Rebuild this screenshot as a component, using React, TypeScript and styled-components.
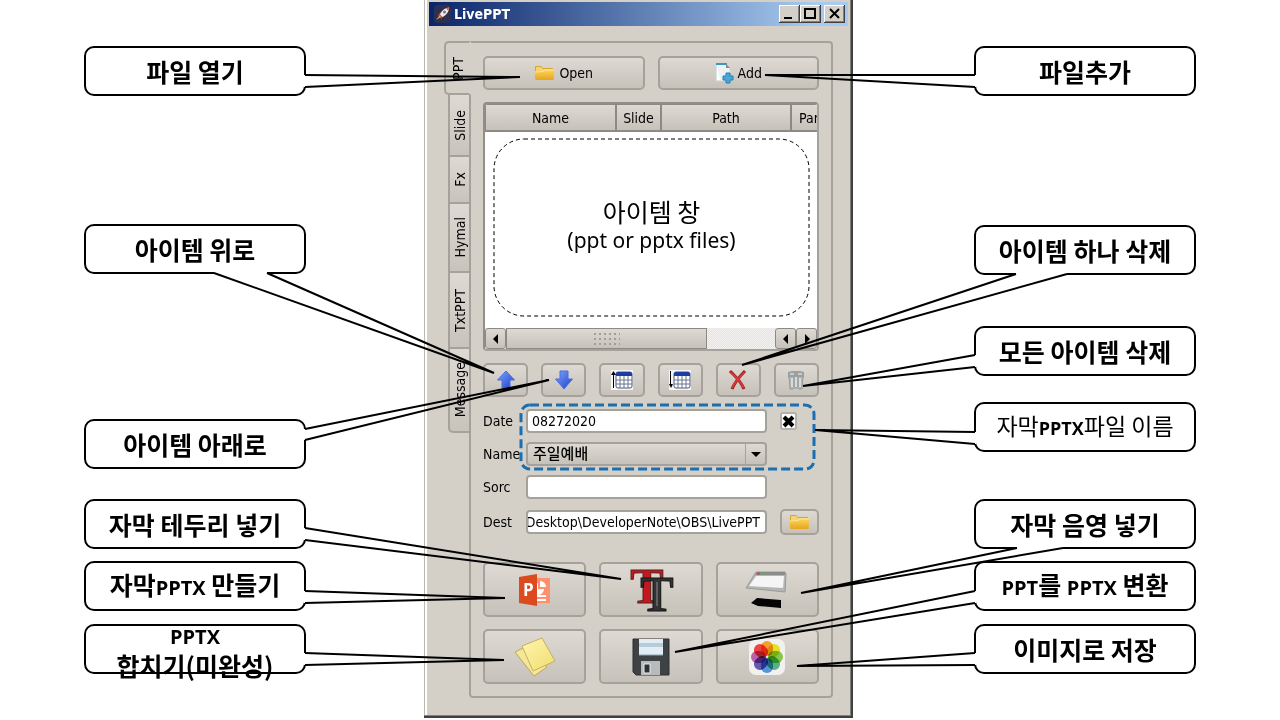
import React, { useState } from "react";
import styled, { createGlobalStyle, css } from "styled-components";

const face = "#d4d0c8";
const edge = "#a5a19b";
const faceGradient = "linear-gradient(#dedad3, #c6c1b9)";
const uiFont = '"DejaVu Sans Condensed", "DejaVu Sans", "Noto Sans CJK KR", sans-serif';
const noteFont = '"Noto Sans CJK KR", "Noto Sans", sans-serif';

const GlobalStyle = createGlobalStyle`
  *, *::before, *::after { box-sizing: border-box; }
  body { margin: 0; background: #fff; color: #000; font-family: ${uiFont}; font-size: 14px; }
  button, input, select { font: inherit; color: inherit; margin: 0; }
  p { margin: 0; }
`;

const Slide = styled.main`
  display: flex;
  justify-content: center;
  align-items: flex-start;
  min-height: 100vh;
  overflow: hidden;
`;

const NoteColumn = styled.section`
  flex: 0 0 222px;
  display: flex;
  flex-direction: column;
  padding-top: 46px;
  font-family: ${noteFont};
`;

const NoteBox = styled.div<{ $gap: number; $light?: boolean }>`
  position: relative;
  display: flex;
  flex-direction: column;
  align-items: center;
  justify-content: center;
  height: 50px;
  margin-top: ${(p) => p.$gap}px;
  border: 2px solid #000;
  border-radius: 10px;
  background: #fff;
  text-align: center;
  white-space: nowrap;
  font-size: ${(p) => (p.$light ? 23 : 25)}px;
  font-weight: ${(p) => (p.$light ? 400 : 700)};
  line-height: 29px;
`;

const NoteText = styled.p`
  position: relative;
  z-index: 2;
`;

const Latin = styled.span<{ $small?: boolean }>`
  font-family: "Open Sans", "Noto Sans", sans-serif;
  font-size: ${(p) => (p.$small ? 18 : 20)}px;
  font-weight: 700;
`;

const Tail = styled.svg`
  position: absolute;
  top: -2px;
  left: -2px;
  width: 222px;
  height: 50px;
  overflow: visible;
  pointer-events: none;
  z-index: 1;
`;

type Point = [number, number];

interface NoteProps {
  gap?: number;
  light?: boolean;
  from: Point;
  tip: Point;
  to: Point;
  children: React.ReactNode;
}

function Note({ gap = 0, light, from, tip, to, children }: NoteProps) {
  return (
    <NoteBox $gap={gap} $light={light}>
      <Tail aria-hidden="true">
        <path d={`M${from}L${to}`} stroke="#fff" strokeWidth="3" />
        <path d={`M${from}L${tip}L${to}`} fill="none" stroke="#000" strokeWidth="2" strokeLinejoin="bevel" />
      </Tail>
      <NoteText>{children}</NoteText>
    </NoteBox>
  );
}

const Window = styled.section`
  flex: 0 0 429px;
  min-width: 0;
  margin: 0 121px 0 118px;
  padding: 2px 5px 20px;
  background: ${face};
  box-shadow: inset -2px -2px #404040, inset -3px -3px #808080, inset 1px 0 #bdb9b1, inset 3px 0 #fff;
`;

const TitleBar = styled.header`
  display: flex;
  align-items: center;
  gap: 3px;
  height: 24px;
  padding: 0 3px 0 5px;
  background: linear-gradient(90deg, #0a246a, #a6caf0 92%);
  color: #fff;
`;

const Title = styled.h1`
  flex: 1;
  margin: 0;
  font-size: 14px;
  line-height: 20px;
`;

const CaptionButtons = styled.div`
  display: flex;
`;

const CaptionButton = styled.button<{ $apart?: boolean }>`
  display: flex;
  width: 21px;
  height: 18px;
  padding: 0;
  margin-left: ${(p) => (p.$apart ? 3 : 0)}px;
  border: 0;
  background: ${face};
  box-shadow: inset -1px -1px #404040, inset 1px 1px #fff, inset -2px -2px #808080;
`;

const Client = styled.div`
  display: flex;
  padding: 15px 15px 0;
`;

const Tabs = styled.div`
  flex: 0 0 27px;
  margin-right: -2px;
  display: flex;
  flex-direction: column;
  align-items: flex-end;
`;

const Tab = styled.button<{ $height: number; $active?: boolean }>`
  display: flex;
  align-items: center;
  justify-content: center;
  width: 23px;
  height: ${(p) => p.$height}px;
  padding: 0;
  border: 2px solid ${edge};
  border-top-width: 0;
  background: linear-gradient(#dedad3, #c8c3bb);
  span {
    writing-mode: vertical-rl;
    transform: rotate(180deg);
    line-height: 18px;
  }
  &:last-child { border-bottom-left-radius: 5px; }
  ${(p) =>
    p.$active &&
    css`
      position: relative;
      width: 27px;
      border-top-width: 2px;
      border-right-color: ${face};
      border-radius: 5px 0 0 5px;
      background: ${face};
    `}
`;

const Pane = styled.div`
  flex: 1;
  min-width: 0;
  padding: 13px 12px 12px;
  border: 2px solid ${edge};
  border-radius: 0 4px 4px 4px;
`;

const ButtonGrid = styled.div<{ $columns: number; $top?: number }>`
  display: grid;
  grid-template-columns: repeat(${(p) => p.$columns}, 1fr);
  gap: 12px 13px;
  margin-top: ${(p) => p.$top ?? 0}px;
`;

const PushButton = styled.button<{ $height: number }>`
  display: flex;
  align-items: center;
  justify-content: center;
  gap: 4px;
  height: ${(p) => p.$height}px;
  padding: 0;
  border: 2px solid ${edge};
  border-radius: 5px;
  background: ${faceGradient};
  svg { flex: none; }
`;

const ListFrame = styled.div`
  margin-top: 12px;
  border: 2px solid #918d87;
  border-right-color: ${edge};
  border-bottom-color: ${edge};
  border-radius: 4px;
  background: #fff;
  overflow: hidden;
`;

const ItemTable = styled.table`
  table-layout: fixed;
  width: 342px;
  border-collapse: separate;
  border-spacing: 0;
  th {
    height: 28px;
    padding: 0;
    border: 1px solid #8d8983;
    border-width: 1px 1px 2px;
    background: ${faceGradient};
    font-weight: 400;
    text-align: center;
  }
`;

const DropArea = styled.div`
  position: relative;
  display: flex;
  flex-direction: column;
  align-items: center;
  justify-content: center;
  height: 177px;
  margin: 7px 8px 12px 9px;
  padding-bottom: 4px;
  font-family: ${noteFont};
  font-size: 25px;
  line-height: 29px;
`;

const DropLatin = styled.p`
  font-family: "Noto Sans", sans-serif;
  font-size: 21px;
`;

const Outline = styled.svg`
  position: absolute;
  inset: 0;
  width: 100%;
  height: 100%;
  overflow: visible;
  pointer-events: none;
`;

const ScrollBar = styled.div`
  display: flex;
  height: 21px;
  background: repeating-conic-gradient(#f4f3f1 0 25%, #e4e2de 0 50%) 0 0 / 2px 2px;
`;

const ScrollButton = styled.button`
  display: flex;
  align-items: center;
  justify-content: center;
  width: 21px;
  padding: 0;
  border: 1px solid #8d8983;
  border-radius: 3px;
  background: ${faceGradient};
`;

const Thumb = styled.div`
  display: flex;
  align-items: center;
  justify-content: center;
  width: 201px;
  border: 1px solid #8d8983;
  background: ${faceGradient};
`;

const Track = styled.div`
  flex: 1;
`;

const Form = styled.form`
  position: relative;
  display: flex;
  flex-direction: column;
  gap: 9px;
  margin-top: 12px;
`;

const Row = styled.div<{ $tall?: boolean }>`
  display: grid;
  grid-template-columns: 43px 1fr 39px;
  align-items: center;
  height: ${(p) => (p.$tall ? 28 : 24)}px;
`;

const Label = styled.label`
  line-height: 20px;
`;

const field = css`
  width: 100%;
  min-width: 0;
  height: 24px;
  border: 2px solid ${edge};
  border-radius: 4px;
  outline: none;
`;

const FieldCell = styled.div`
  position: relative;
  display: flex;
  margin-right: 13px;
`;

const TextInput = styled.input<{ $tail?: boolean }>`
  ${field}
  padding: 0 4px;
  background: #fff;
  ${(p) => p.$tail && "direction: rtl; padding: 0 5px 0 0;"}
`;

const Select = styled.select`
  ${field}
  appearance: none;
  padding: 0 24px 0 5px;
  background: ${faceGradient};
  font-size: 15px;
  font-weight: 500;
  line-height: 20px;
`;

const SelectArrow = styled.span`
  position: absolute;
  top: 2px;
  right: 2px;
  bottom: 2px;
  display: flex;
  align-items: center;
  justify-content: center;
  width: 20px;
  border-left: 1px solid ${edge};
  pointer-events: none;
`;

const Check = styled.input`
  appearance: none;
  width: 17px;
  height: 18px;
  margin: 0;
  border: 2px solid #b5b1aa;
  border-radius: 3px;
  background: #fff;
`;

const CheckCell = styled.div`
  position: relative;
  display: flex;
  width: 17px;
  svg {
    position: absolute;
    inset: 0;
    pointer-events: none;
  }
`;

const DashedGroup = styled.svg`
  position: absolute;
  top: -4px;
  left: 38px;
  width: calc(100% - 43px);
  height: 64px;
  overflow: visible;
  pointer-events: none;
`;

const RocketIcon = () => (
  <svg width="17" height="18" viewBox="0 0 17 18" aria-hidden="true">
    <rect width="17" height="18" rx="4" fill="#2b3150" />
    <path d="M4 10l3-3 3 3-3 4-1-2z" fill="#d9472b" />
    <path d="M6 9.500C8 5 11 3 15 2.500c0 4-2.500 7.500-6.500 9.500z" fill="#f1ece9" />
    <path d="M12 3.500l3-1-.6 3.500z" fill="#de5a3c" />
    <circle cx="10.500" cy="7" r="1.500" fill="#6f7795" />
    <path d="M2 15l3.500-4.500L7 12z" fill="#f3a34c" />
  </svg>
);

const FolderIcon = () => (
  <svg width="21" height="16" viewBox="0 0 21 16" aria-hidden="true">
    <defs>
      <linearGradient id="folder" x2="0" y2="1">
        <stop stopColor="#fbd660" />
        <stop offset="1" stopColor="#e6a51b" />
      </linearGradient>
    </defs>
    <path d="M1 13V2q0-1 1-1h5l2 2h9q1 0 1 1v9z" fill="#d9a431" />
    <path d="M2 2h5l2 2h9v2H2z" fill="#f5d372" />
    <path d="M.5 6.500l8-.5 2-1.500H20.500L19.500 15H1.500z" fill="url(#folder)" />
    <path d="M1 7l8-.5 2-1.500h9" fill="none" stroke="#ffe891" />
  </svg>
);

const AddIcon = () => (
  <svg width="19" height="21" viewBox="0 0 19 21" aria-hidden="true">
    <path d="M1 1h10l4 4v13H1z" fill="#eef2f5" stroke="#c9d3da" />
    <path d="M1 1h11" stroke="#3f95bd" strokeWidth="2" />
    <path d="M11 1v4h4z" fill="#8c8a80" />
    <path d="M2 3l3 14H2z" fill="#fff" />
    <path d="M11 10h4v3h3v4h-3v3h-4v-3H8v-4h3z" fill="#48a8d8" stroke="#2b7fab" />
  </svg>
);

const ArrowIcon = ({ down }: { down?: boolean }) => (
  <svg width="20" height="20" viewBox="0 0 20 20" aria-hidden="true">
    <defs>
      <linearGradient id="blue" x2="1" y2="1">
        <stop stopColor="#7da4ff" />
        <stop offset="1" stopColor="#1f40c8" />
      </linearGradient>
    </defs>
    <path
      d={down ? "M6 1h8v8h4.500L10 19 1.500 9H6z" : "M10 1l8.500 9H14v8H6v-8H1.500z"}
      fill="url(#blue)"
      stroke="#4a6fe0"
    />
  </svg>
);

const GridIcon = ({ down }: { down?: boolean }) => (
  <svg width="22" height="20" viewBox="0 0 22 20" aria-hidden="true">
    <path d="M0 0h22v20H0z" fill="#f6f6f8" />
    <path d="M5 4q0-2 2-2h12q2 0 2 2v12q0 2-2 2H7q-2 0-2-2z" fill="#fff" stroke="#4d5878" />
    <path d="M5 6V4q0-2 2-2h12q2 0 2 2v2z" fill="#1f3d9e" />
    <path d="M9 6v12M13 6v12M17 6v12M5 10h16M5 14h16" stroke="#69758f" />
    <path d={down ? "M1.500 1v15" : "M2.500 4v14"} stroke="#000" />
    <path d={down ? "M0 14h4l-2 4z" : "M0 5h5L2.500 1z"} />
  </svg>
);

const DeleteIcon = () => (
  <svg width="20" height="22" viewBox="0 0 20 22" aria-hidden="true">
    <path d="M2 2c4 4 11 10 14 18M17 2C11 8 7 13 4 20" fill="none" stroke="#8f1c1c" strokeWidth="3" />
    <path d="M2 3c4 3 10 9 14 16M17 3C11 8 7 13 4 19" fill="none" stroke="#d8383a" strokeWidth="2" />
  </svg>
);

const TrashIcon = () => (
  <svg width="18" height="20" viewBox="0 0 18 20" aria-hidden="true">
    <path d="M2 5h14l-1 14h-3l-1-1H7l-1 1H3z" fill="#b3b8b6" stroke="#969c9a" />
    <path d="M5 1h8l4 1v6l-2-1H3L1 8V2z" fill="#9aa1a0" />
    <path d="M5 8v9M9 7v10M13 8v9" stroke="#d9dcda" strokeWidth="2" />
    <path d="M7 7v10M11 7v10" stroke="#8e9593" />
    <path d="M3 4h4M11 4h4" stroke="#c8cbc9" strokeWidth="2" />
  </svg>
);

const PowerPointIcon = () => (
  <svg width="34" height="32" viewBox="0 0 34 32" aria-hidden="true">
    <path d="M17 4h15v25H17z" fill="#ff8f6d" />
    <path d="M20 9a6 6 0 1 0 6 6h-6z" fill="#fff" />
    <path d="M22 7a6 6 0 0 1 6 6h-6z" fill="#fff" />
    <path d="M19 22h9M19 26h9" stroke="#fff" strokeWidth="2" />
    <path d="M1 3l18-3v32L1 29z" fill="#dc4a1f" />
    <text x="5" y="22" fontFamily="Open Sans, sans-serif" fontSize="17" fontWeight="700" fill="#fff">P</text>
  </svg>
);

const TextBorderIcon = () => (
  <svg width="42" height="46" viewBox="0 0 42 46" overflow="visible" aria-hidden="true">
    <g fontFamily="Liberation Serif, serif" fontWeight="700" textAnchor="middle">
      <text x="17" y="36" fontSize="50" fill="#c5171d" stroke="#5c2020">T</text>
      <text x="27" y="44" fontSize="50" fill="#333" stroke="#101010">T</text>
    </g>
    <path d="M27 15v24" stroke="#606060" strokeWidth="2" />
  </svg>
);

const ShadowIcon = () => (
  <svg width="44" height="40" viewBox="0 0 44 40" aria-hidden="true">
    <path d="M11 2h29l1 2-1 18L1 18z" fill="#b5b5b5" stroke="#9a9a9a" />
    <path d="M12 2h28v3H10z" fill="#8c8c8c" />
    <path d="M11 6h28l-1 12-34-2z" fill="#f5f5f5" />
    <path d="M12 3.500h3" stroke="#d34b43" strokeWidth="2" />
    <path d="M17 3.500h3" stroke="#5eab5a" strokeWidth="2" />
    <path d="M12 28l24 2v8l-23-2-7-3z" fill="#050505" />
  </svg>
);

const NotesIcon = () => (
  <svg width="43" height="40" viewBox="0 0 43 40" aria-hidden="true">
    <defs>
      <linearGradient id="paper" x2="1" y2="1">
        <stop stopColor="#fff5ad" />
        <stop offset="1" stopColor="#f1dd72" />
      </linearGradient>
    </defs>
    <path d="M2 15l10-5 22 20-13 9z" fill="#f5e794" stroke="#b7a860" />
    <path d="M9 9L29 1l13 23-22 10z" fill="url(#paper)" stroke="#c2b163" />
  </svg>
);

const FloppyIcon = () => (
  <svg width="38" height="38" viewBox="0 0 38 38" aria-hidden="true">
    <path d="M1 1h36v36H4l-3-3z" fill="#3f4245" stroke="#2d2f31" />
    <path d="M7 1h24v16H7z" fill="#e3edf3" />
    <path d="M7 5h24v4H7z" fill="#b4ccdc" />
    <path d="M7 17h24" stroke="#8fa5b3" />
    <path d="M9 23h19v14H9z" fill="#b8bbbd" />
    <path d="M12 26h6v9h-6z" fill="#2e3032" stroke="#ececec" />
  </svg>
);

const petals = ["#f79a1c", "#dfe01c", "#82c341", "#4cae82", "#4c8fd6", "#5a50ae", "#b55aa5", "#ee3a3c"];

const PhotosIcon = () => (
  <svg width="36" height="36" viewBox="0 0 36 36" aria-hidden="true">
    <rect width="36" height="36" rx="7" fill="#f2f1ef" />
    <g style={{ isolation: "isolate" }}>
      {petals.map((color, i) => (
        <rect
          key={color}
          x="12"
          y="2"
          width="12"
          height="15"
          rx="6"
          fill={color}
          opacity="0.95"
          transform={`rotate(${i * 45} 18 18)`}
          style={{ mixBlendMode: "multiply" }}
        />
      ))}
    </g>
  </svg>
);

const Triangle = ({ d }: { d: string }) => (
  <svg width="10" height="10" viewBox="0 0 10 10" aria-hidden="true">
    <path d={d} />
  </svg>
);

const Grip = () => (
  <svg width="26" height="14" viewBox="0 0 26 14" aria-hidden="true">
    {[1, 6, 11].map((y) => (
      <path key={y} d={`M0 ${y + 1}h26`} stroke="#a29e97" strokeWidth="2" strokeDasharray="2 3" />
    ))}
  </svg>
);

const tabs = [
  { name: "PPT", height: 54 },
  { name: "Slide", height: 62 },
  { name: "Fx", height: 47 },
  { name: "Hymal", height: 69 },
  { name: "TxtPPT", height: 76 },
  { name: "Message", height: 84 },
];

const orderTools = [
  { name: "Move up", icon: <ArrowIcon /> },
  { name: "Move down", icon: <ArrowIcon down /> },
  { name: "Sort ascending", icon: <GridIcon /> },
  { name: "Sort descending", icon: <GridIcon down /> },
  { name: "Delete item", icon: <DeleteIcon /> },
  { name: "Delete all", icon: <TrashIcon /> },
];

const actions = [
  { name: "Make PPTX", icon: <PowerPointIcon /> },
  { name: "Text border", icon: <TextBorderIcon /> },
  { name: "Text shadow", icon: <ShadowIcon /> },
  { name: "Merge PPTX", icon: <NotesIcon /> },
  { name: "Convert to PPTX", icon: <FloppyIcon /> },
  { name: "Save as image", icon: <PhotosIcon /> },
];

function LivePPTWindow() {
  const [date, setDate] = useState("08272020");
  const [source, setSource] = useState("");
  const [dest, setDest] = useState("Desktop\\DeveloperNote\\OBS\\LivePPT");
  const [useName, setUseName] = useState(true);
  const [activeTab, setActiveTab] = useState("PPT");

  return (
    <Window>
      <TitleBar>
        <RocketIcon />
        <Title>LivePPT</Title>
        <CaptionButtons>
          <CaptionButton aria-label="Minimize">
            <svg width="21" height="18" aria-hidden="true"><path d="M5 12h8v2H5z" /></svg>
          </CaptionButton>
          <CaptionButton aria-label="Maximize">
            <svg width="21" height="18" aria-hidden="true">
              <path d="M5 4h10v9H5z" fill="none" stroke="#000" strokeWidth="2" />
            </svg>
          </CaptionButton>
          <CaptionButton aria-label="Close" $apart>
            <svg width="21" height="18" aria-hidden="true">
              <path d="M6 4l9 9M15 4l-9 9" stroke="#000" strokeWidth="2" />
            </svg>
          </CaptionButton>
        </CaptionButtons>
      </TitleBar>
      <Client>
        <Tabs role="tablist" aria-orientation="vertical">
          {tabs.map((tab) => (
            <Tab
              key={tab.name}
              role="tab"
              aria-selected={tab.name === activeTab}
              $active={tab.name === activeTab}
              $height={tab.height}
              onClick={() => setActiveTab(tab.name)}
            >
              <span>{tab.name}</span>
            </Tab>
          ))}
        </Tabs>
        <Pane>
          <ButtonGrid $columns={2}>
            <PushButton $height={34}><FolderIcon />Open</PushButton>
            <PushButton $height={34}><AddIcon />Add</PushButton>
          </ButtonGrid>
          <ListFrame>
            <ItemTable>
              <colgroup>
                <col width="131" />
                <col width="45" />
                <col width="130" />
                <col width="36" />
              </colgroup>
              <thead>
                <tr>
                  <th scope="col">Name</th>
                  <th scope="col">Slide</th>
                  <th scope="col">Path</th>
                  <th scope="col">Par</th>
                </tr>
              </thead>
            </ItemTable>
            <DropArea>
              <Outline aria-hidden="true">
                <rect width="100%" height="100%" rx="30" fill="none" stroke="#000" strokeDasharray="4 3" />
              </Outline>
              <p>아이템 창</p>
              <DropLatin>(ppt or pptx files)</DropLatin>
            </DropArea>
            <ScrollBar>
              <ScrollButton aria-label="Scroll left"><Triangle d="M7 0v10L2 5z" /></ScrollButton>
              <Thumb><Grip /></Thumb>
              <Track />
              <ScrollButton aria-label="Page left"><Triangle d="M7 0v10L2 5z" /></ScrollButton>
              <ScrollButton aria-label="Scroll right"><Triangle d="M3 0v10l5-5z" /></ScrollButton>
            </ScrollBar>
          </ListFrame>
          <ButtonGrid $columns={6} $top={12}>
            {orderTools.map((tool) => (
              <PushButton key={tool.name} $height={34} aria-label={tool.name}>{tool.icon}</PushButton>
            ))}
          </ButtonGrid>
          <Form onSubmit={(e) => e.preventDefault()}>
            <Row>
              <Label htmlFor="date">Date</Label>
              <FieldCell>
                <TextInput id="date" value={date} onChange={(e) => setDate(e.target.value)} />
              </FieldCell>
              <CheckCell>
                <Check
                  type="checkbox"
                  aria-label="Use date and name"
                  checked={useName}
                  onChange={(e) => setUseName(e.target.checked)}
                />
                {useName && (
                  <svg width="17" height="18" aria-hidden="true">
                    <path d="M4 5l9 9M13 5l-9 9" stroke="#000" strokeWidth="4" />
                  </svg>
                )}
              </CheckCell>
            </Row>
            <Row>
              <Label htmlFor="name">Name</Label>
              <FieldCell>
                <Select id="name" defaultValue="주일예배">
                  <option>주일예배</option>
                </Select>
                <SelectArrow><Triangle d="M0 3h10L5 8z" /></SelectArrow>
              </FieldCell>
            </Row>
            <Row>
              <Label htmlFor="sorc">Sorc</Label>
              <FieldCell>
                <TextInput id="sorc" value={source} onChange={(e) => setSource(e.target.value)} />
              </FieldCell>
            </Row>
            <Row $tall>
              <Label htmlFor="dest">Dest</Label>
              <FieldCell>
                <TextInput id="dest" $tail value={dest} onChange={(e) => setDest(e.target.value)} />
              </FieldCell>
              <PushButton type="button" $height={26} aria-label="Browse"><FolderIcon /></PushButton>
            </Row>
            <DashedGroup aria-hidden="true">
              <rect width="100%" height="100%" rx="9" fill="none" stroke="#1a6fb0" strokeWidth="3" strokeDasharray="9 4" />
            </DashedGroup>
          </Form>
          <ButtonGrid $columns={3} $top={26}>
            {actions.map((action) => (
              <PushButton key={action.name} $height={55} aria-label={action.name}>{action.icon}</PushButton>
            ))}
          </ButtonGrid>
        </Pane>
      </Client>
    </Window>
  );
}

export default function App() {
  return (
    <>
      <GlobalStyle />
      <Slide>
        <NoteColumn>
          <Note from={[221, 29]} tip={[436, 31]} to={[221, 41]}>파일 열기</Note>
          <Note gap={128} from={[130, 49]} tip={[410, 149]} to={[183, 49]}>아이템 위로</Note>
          <Note gap={145} from={[221, 10]} tip={[465, -39]} to={[221, 21]}>아이템 아래로</Note>
          <Note gap={30} from={[221, 29]} tip={[537, 80]} to={[221, 41]}>자막 테두리 넣기</Note>
          <Note gap={12} from={[221, 30]} tip={[421, 37]} to={[221, 42]}>
            자막<Latin>PPTX</Latin> 만들기
          </Note>
          <Note gap={13} from={[221, 29]} tip={[420, 36]} to={[221, 41]}>
            <Latin>PPTX</Latin>
            <br />
            합치기(미완성)
          </Note>
        </NoteColumn>
        <LivePPTWindow />
        <NoteColumn>
          <Note from={[1, 29]} tip={[-209, 29]} to={[1, 41]}>파일추가</Note>
          <Note gap={129} from={[42, 49]} tip={[-232, 140]} to={[93, 49]}>아이템 하나 삭제</Note>
          <Note gap={51} from={[1, 29]} tip={[-171, 60]} to={[1, 41]}>모든 아이템 삭제</Note>
          <Note gap={26} light from={[1, 30]} tip={[-159, 28]} to={[1, 42]}>
            자막<Latin $small>PPTX</Latin>파일 이름
          </Note>
          <Note gap={47} from={[43, 49]} tip={[-173, 94]} to={[89, 49]}>자막 음영 넣기</Note>
          <Note gap={12} from={[1, 30]} tip={[-299, 91]} to={[1, 42]}>
            <Latin>PPT</Latin>를 <Latin>PPTX</Latin> 변환
          </Note>
          <Note gap={13} from={[1, 29]} tip={[-177, 42]} to={[1, 41]}>이미지로 저장</Note>
        </NoteColumn>
      </Slide>
    </>
  );
}
